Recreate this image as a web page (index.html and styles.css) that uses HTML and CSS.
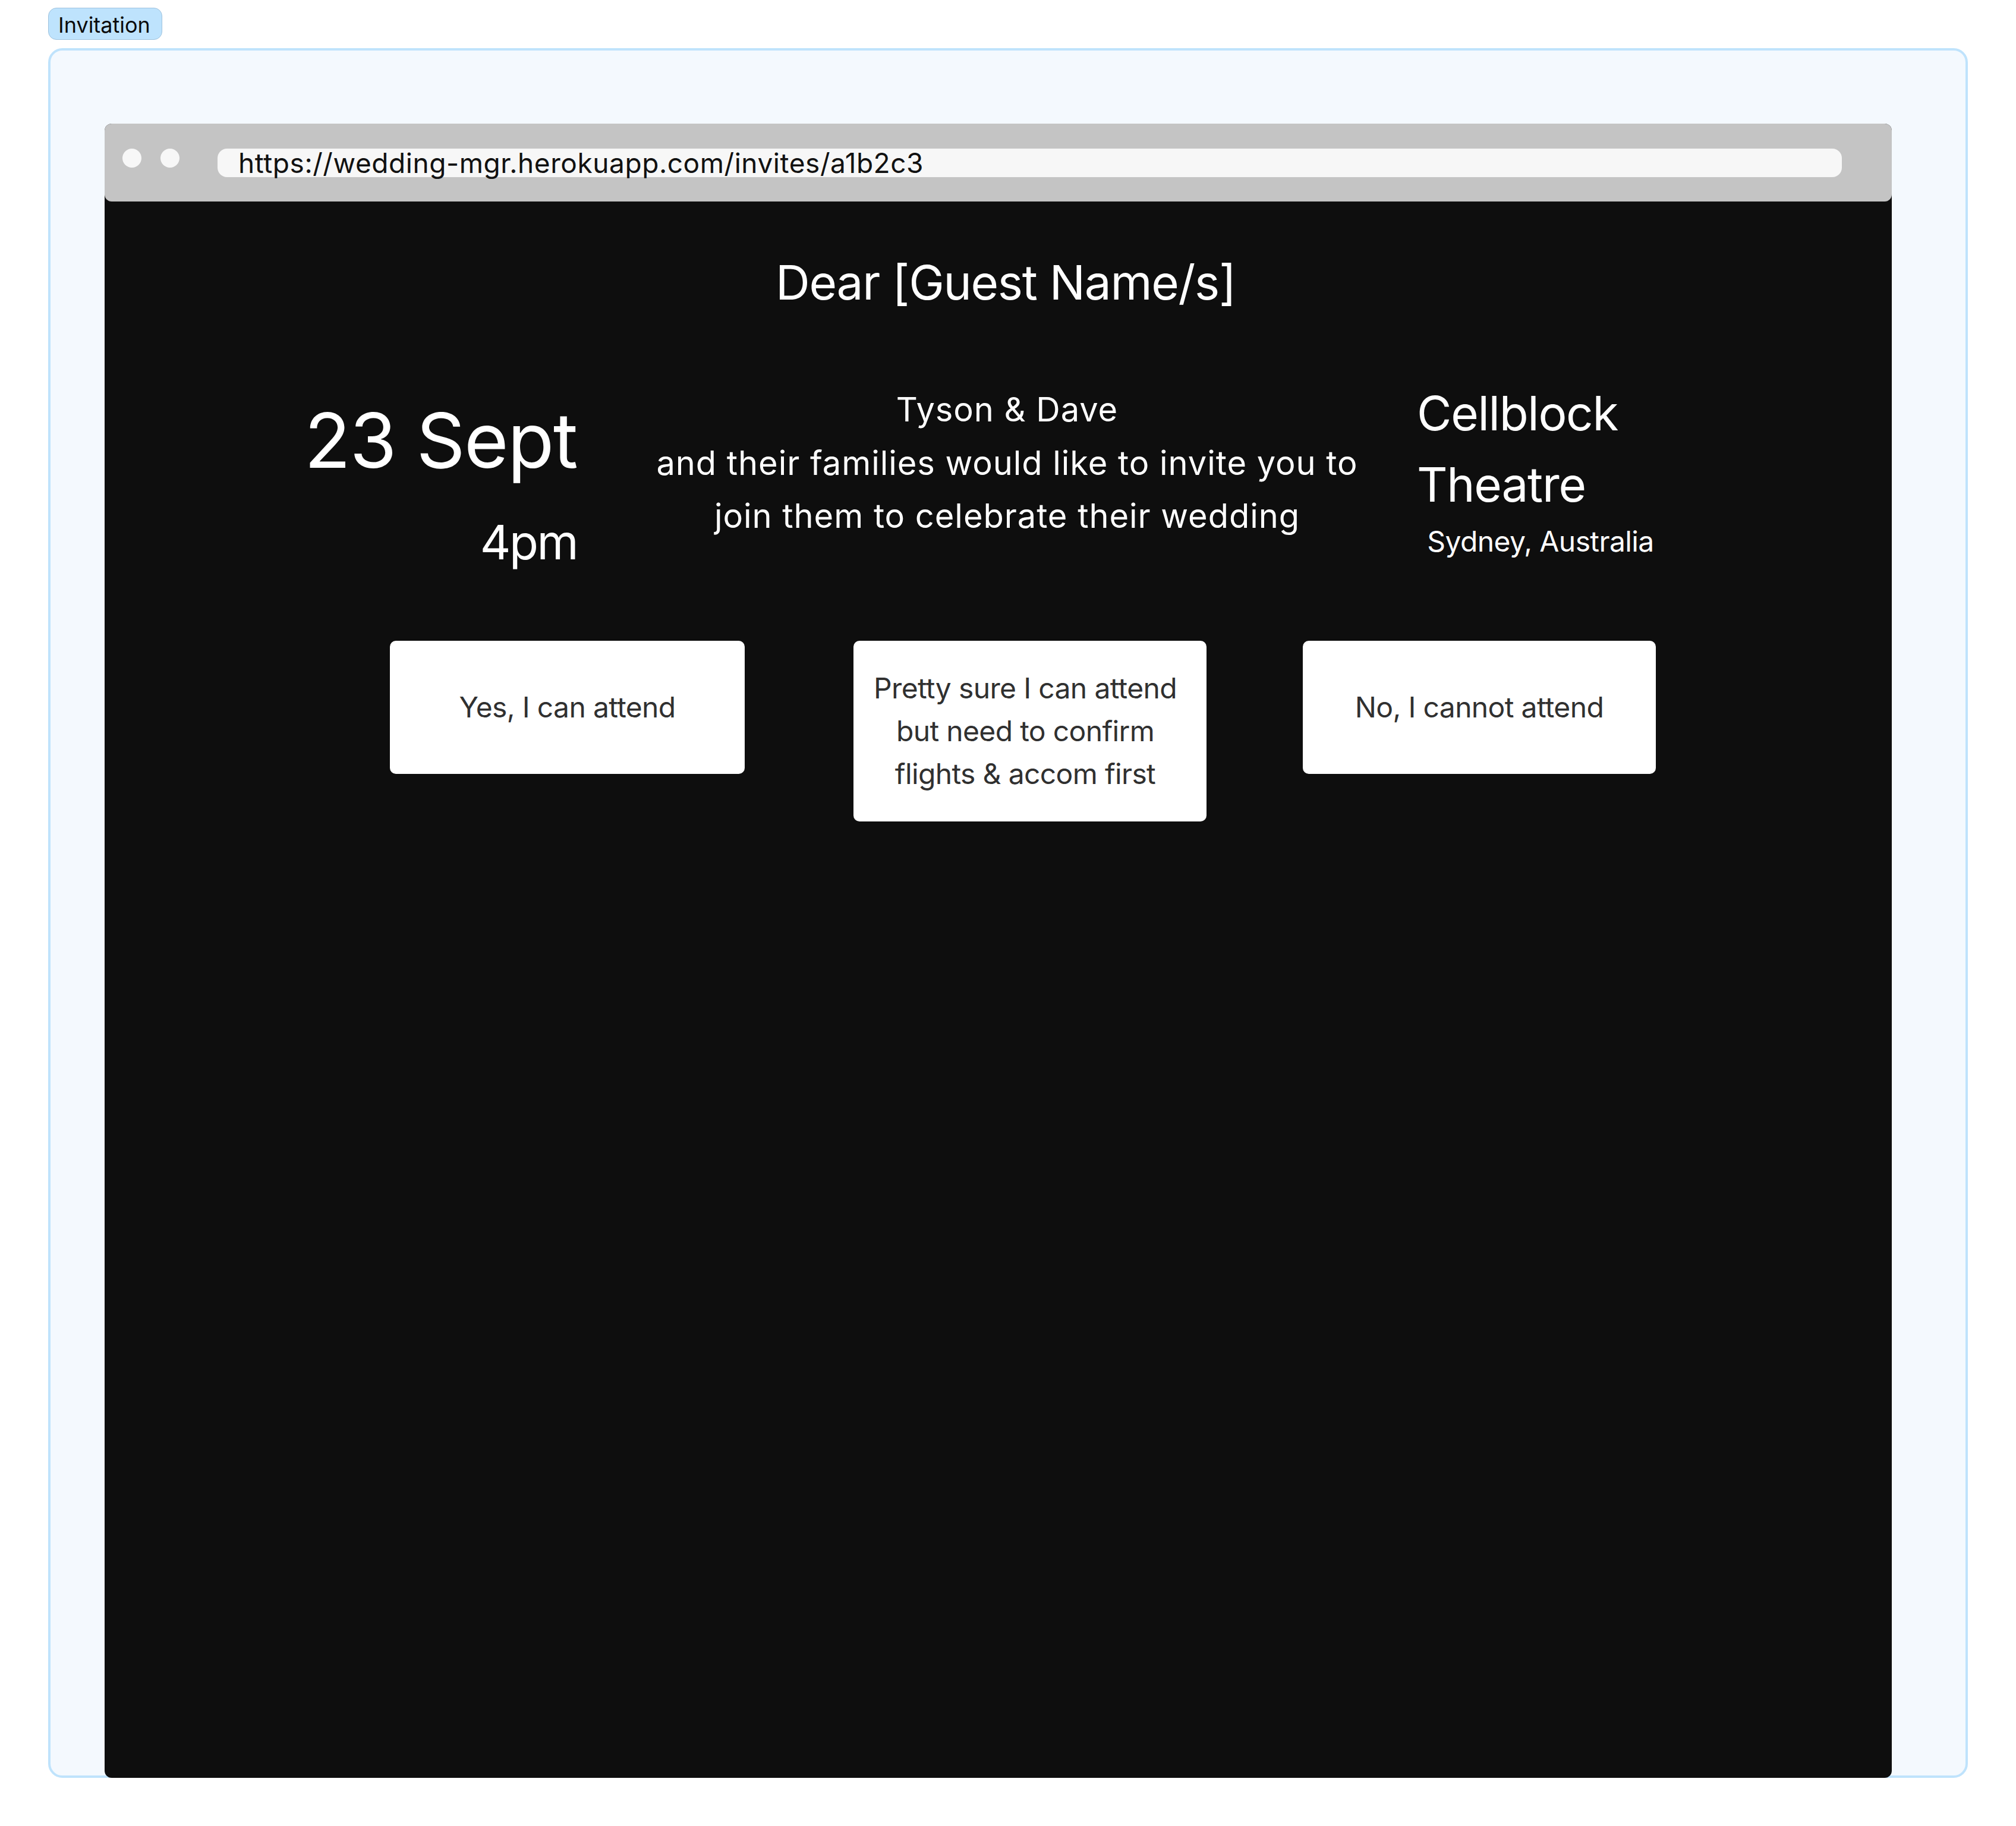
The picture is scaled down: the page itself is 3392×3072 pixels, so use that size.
FILE: index.html
```html
<!DOCTYPE html>
<html lang="en">
<head>
<meta charset="utf-8">
<title>Invitation</title>
<link rel="stylesheet" href="styles.css">
</head>
<body>
<div class="page">
  <div class="badge">Invitation</div>
  <div class="frame">
    <div class="browser">
      <div class="browser-bar">
        <span class="dot"></span>
        <span class="dot dot-second"></span>
        <div class="url">https://wedding-mgr.herokuapp.com/invites/a1b2c3</div>
      </div>
      <div class="content">
        <h1 class="dear">Dear [Guest Name/s]</h1>
        <div class="info">
          <div class="when">
            <div class="date">23 Sept</div>
            <div class="time">4pm</div>
          </div>
          <div class="hosts">
            <div>Tyson &amp; Dave</div>
            <div>and their families would like to invite you to<br>join them to celebrate their wedding</div>
          </div>
          <div class="where">
            <div class="venue">Cellblock Theatre</div>
            <div class="city">Sydney, Australia</div>
          </div>
        </div>
        <div class="rsvp">
          <button class="btn btn-yes">Yes, I can attend</button>
          <button class="btn btn-maybe">Pretty sure I can attend<br>but need to confirm<br>flights &amp; accom first</button>
          <button class="btn btn-no">No, I cannot attend</button>
        </div>
      </div>
    </div>
  </div>
</div>
</body>
</html>
```
FILE: styles.css
```css
* { box-sizing: border-box; }

body {
  margin: 0;
  background: #ffffff;
  font-family: Inter, "Noto Sans", sans-serif;
  color: #000;
}

.page {
  padding: 13px 0 0 81px;
  width: 3311px;
}

.badge {
  display: block;
  width: fit-content;
  height: 54px;
  padding: 0 19px 0 16px;
  border: 1.5px solid #9ec2dd;
  border-radius: 14px;
  background: #bee3fd;
  font-size: 36px;
  line-height: 57px;
  color: #0a0a0a;
}

.frame {
  margin-top: 14px;
  width: 3230px;
  border: 4px solid #bfe3fc;
  border-radius: 24px;
  background: #f4f9fe;
  padding: 123px 124px 0 91px;
}

.browser {
  height: 2783px;
  margin-bottom: -4px;
  background: #0e0e0e;
  border-radius: 12px;
  display: flex;
  flex-direction: column;
}

.browser-bar {
  height: 131px;
  flex: none;
  background: #c4c4c4;
  border-radius: 12px;
  display: flex;
  align-items: flex-start;
  padding: 42px 84px 0 30px;
}

.dot {
  width: 32px;
  height: 32px;
  border-radius: 50%;
  background: #f7f7f7;
  flex: none;
}

.dot-second { margin-left: 32px; }

.url {
  flex: 1;
  margin-left: 64px;
  height: 48px;
  border-radius: 16px;
  background: #f7f7f7;
  padding-left: 35px;
  font-size: 46px;
  line-height: 48px;
  letter-spacing: 0.56px;
  color: #111;
  white-space: nowrap;
}

.content {
  padding-top: 76px;
  color: #ffffff;
}

.dear {
  margin: 0 0 0 25px;
  font-size: 80px;
  line-height: 120px;
  font-weight: 400;
  letter-spacing: -1.3px;
  text-align: center;
}

.info {
  display: flex;
  align-items: flex-start;
  margin-top: 100px;
  padding-left: 335px;
}

.when {
  width: 460px;
  margin-top: 10px;
  text-align: right;
  white-space: nowrap;
}

.date {
  font-size: 128px;
  line-height: 192px;
  letter-spacing: -1.6px;
}

.time {
  margin-top: 15px;
  font-size: 80px;
  line-height: 120px;
  letter-spacing: -2.5px;
}

.hosts {
  width: 1281px;
  margin-left: 83px;
  margin-top: 10px;
  text-align: center;
  font-size: 56px;
  line-height: 89.6px;
  letter-spacing: 0.95px;
  white-space: nowrap;
}

.where {
  width: 416px;
  margin-left: 49px;
}

.venue {
  font-size: 80px;
  line-height: 120px;
  letter-spacing: -1.3px;
}

.city {
  font-size: 48px;
  line-height: 72px;
  letter-spacing: -0.6px;
  text-align: center;
  white-space: nowrap;
}

.rsvp {
  display: flex;
  align-items: flex-start;
  margin-top: 106px;
  padding-left: 480px;
}

.btn {
  min-height: 224px;
  padding: 44px 20px;
  border: none;
  border-radius: 10px;
  background: #ffffff;
  color: #303030;
  font-family: Inter, "Noto Sans", sans-serif;
  font-size: 48px;
  line-height: 72px;
  letter-spacing: -0.65px;
  text-align: center;
  display: flex;
  align-items: center;
  justify-content: center;
  white-space: nowrap;
}

.btn-yes { width: 597px; }
.btn-maybe { width: 594px; margin-left: 183px; padding-right: 30px; padding-left: 14px; }
.btn-no { width: 594px; margin-left: 162px; }
```
